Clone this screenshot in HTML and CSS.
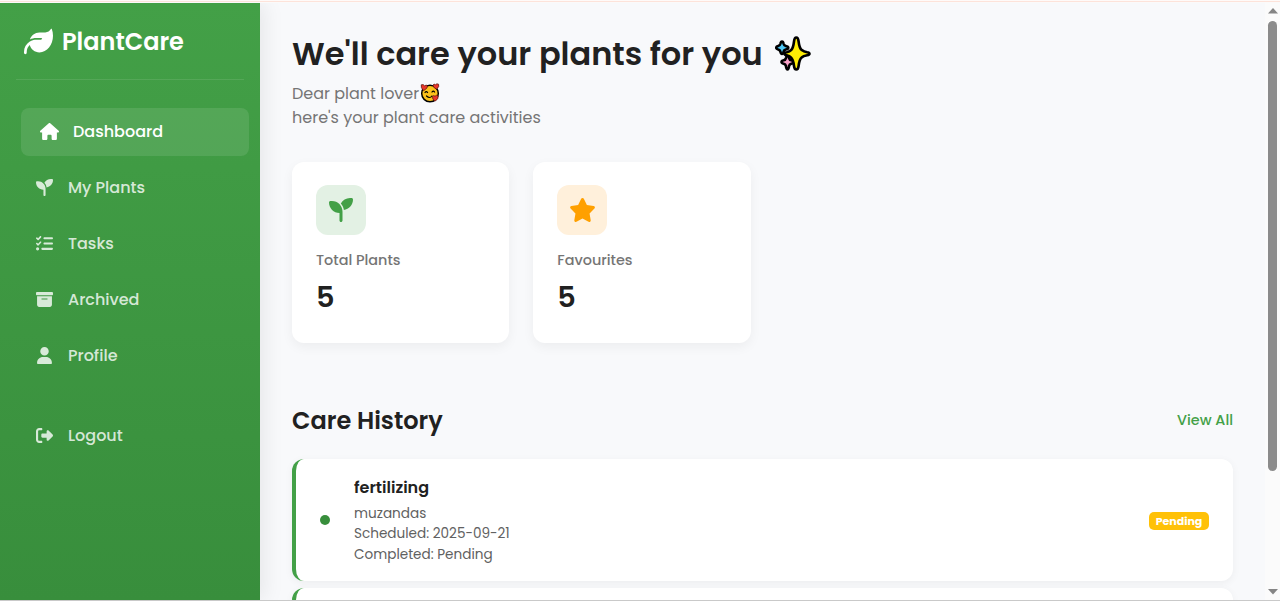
FILE: index.html
```html
<!DOCTYPE html>
<html lang="en">
<head>
<meta charset="utf-8">
<title>PlantCare</title>
<link rel="stylesheet" href="styles.css">
</head>
<body>
<div class="topline"></div>
<div class="app">
  <aside class="sidebar">
    <div class="brand">
      <svg class="brand-icon" viewBox="0 0 512 512"><path d="M272 96c-78.6 0-145.1 51.5-167.7 122.5c33.6-17 71.5-26.5 111.7-26.5h88c8.8 0 16 7.2 16 16s-7.2 16-16 16H288 216s0 0 0 0c-16.6 0-32.7 1.9-48.3 5.4c-25.9 5.9-49.9 16.4-71.4 30.7c0 0 0 0 0 0C38.3 298.8 0 364.9 0 440v16c0 13.3 10.7 24 24 24s24-10.7 24-24V440c0-48.7 20.7-92.5 53.8-123.2C121.6 392.3 190.3 448 272 448l1 0c132.1-.7 239-130.9 239-291.4c0-42.6-7.5-83.1-21.1-119.6c-2.6-6.9-12.7-6.6-16.2-.1C455.9 72.1 418.7 96 376 96L272 96z"/></svg>
      <span class="brand-name">PlantCare</span>
    </div>
    <nav class="menu">
      <a class="item active"><span class="ico"><svg class="wide" viewBox="0 0 576 512"><path d="M575.8 255.5c0 18-15 32.1-32 32.1h-32l.7 160.2c0 2.7-.2 5.4-.5 8.1V472c0 22.1-17.9 40-40 40H456c-1.1 0-2.2 0-3.3-.1c-1.4 .1-2.8 .1-4.2 .1H416 392c-22.1 0-40-17.9-40-40V448 384c0-17.7-14.3-32-32-32H256c-17.7 0-32 14.3-32 32v64 24c0 22.1-17.9 40-40 40H160 128.1c-1.5 0-3-.1-4.5-.2c-1.2 .1-2.4 .2-3.6 .2H104c-22.1 0-40-17.9-40-40V360c0-.9 0-1.9 .1-2.8V287.6H32c-18 0-32-14-32-32.1c0-9 3-17 10-24L266.4 8c7-7 15-8 22-8s15 2 21 7L564.8 231.5c8 7 12 15 11 24z"/></svg></span><span>Dashboard</span></a>
      <a class="item"><span class="ico"><svg viewBox="0 0 512 512"><path d="M512 32c0 113.6-84.6 207.5-194.2 222c-7.1-53.4-30.6-101.6-65.3-139.3C290.8 46.3 364 0 448 0h32c17.7 0 32 14.3 32 32zM0 96C0 78.3 14.3 64 32 64H64c123.7 0 224 100.3 224 224v32V480c0 17.7-14.3 32-32 32s-32-14.3-32-32V320C100.3 320 0 219.7 0 96z"/></svg></span><span>My Plants</span></a>
      <a class="item"><span class="ico"><svg viewBox="0 0 512 512"><path d="M152.1 38.2c9.9 8.9 10.7 24 1.8 33.9l-72 80c-4.4 4.9-10.6 7.8-17.2 7.9s-12.9-2.4-17.6-7L7 113C-2.3 103.6-2.3 88.4 7 79s24.6-9.4 33.9 0l22.1 22.1 55.1-61.2c8.9-9.9 24-10.7 33.9-1.8zm0 160c9.9 8.9 10.7 24 1.8 33.9l-72 80c-4.4 4.9-10.6 7.8-17.2 7.9s-12.9-2.4-17.6-7L7 273c-9.4-9.4-9.4-24.6 0-33.9s24.6-9.4 33.9 0l22.1 22.1 55.1-61.2c8.9-9.9 24-10.7 33.9-1.8zM224 96c0-17.7 14.3-32 32-32H480c17.7 0 32 14.3 32 32s-14.3 32-32 32H256c-17.7 0-32-14.3-32-32zm0 160c0-17.7 14.3-32 32-32H480c17.7 0 32 14.3 32 32s-14.3 32-32 32H256c-17.7 0-32-14.3-32-32zM160 416c0-17.7 14.3-32 32-32H480c17.7 0 32 14.3 32 32s-14.3 32-32 32H192c-17.7 0-32-14.3-32-32zM48 368a48 48 0 1 1 0 96 48 48 0 1 1 0-96z"/></svg></span><span>Tasks</span></a>
      <a class="item"><span class="ico"><svg viewBox="0 0 512 512"><path d="M32 32H480c17.7 0 32 14.3 32 32V96c0 17.7-14.3 32-32 32H32C14.3 128 0 113.7 0 96V64C0 46.3 14.3 32 32 32zm0 128H480V416c0 35.3-28.7 64-64 64H96c-35.3 0-64-28.7-64-64V160zm128 80c0 8.8 7.2 16 16 16H336c8.8 0 16-7.2 16-16s-7.2-16-16-16H176c-8.8 0-16 7.2-16 16z"/></svg></span><span>Archived</span></a>
      <a class="item"><span class="ico"><svg class="slim" viewBox="0 0 448 512"><path d="M224 256A128 128 0 1 0 224 0a128 128 0 1 0 0 256zm-45.7 48C79.8 304 0 383.8 0 482.3C0 498.7 13.3 512 29.7 512H418.3c16.4 0 29.7-13.3 29.7-29.7C448 383.8 368.2 304 269.7 304H178.3z"/></svg></span><span>Profile</span></a>
      <a class="item logout"><span class="ico"><svg viewBox="0 0 512 512"><path d="M377.9 105.9L500.7 228.7c7.2 7.2 11.3 17.1 11.3 27.3s-4.1 20.1-11.3 27.3L377.9 406.1c-6.4 6.4-15 9.9-24 9.9c-18.7 0-33.9-15.2-33.9-33.9l0-62.1-128 0c-17.7 0-32-14.3-32-32l0-64c0-17.7 14.3-32 32-32l128 0 0-62.1c0-18.7 15.2-33.9 33.9-33.9c9 0 17.6 3.6 24 9.9zM160 96L96 96c-17.7 0-32 14.3-32 32l0 256c0 17.7 14.3 32 32 32l64 0c17.7 0 32 14.3 32 32s-14.3 32-32 32l-64 0c-53 0-96-43-96-96L0 128C0 75 43 32 96 32l64 0c17.7 0 32 14.3 32 32s-14.3 32-32 32z"/></svg></span><span>Logout</span></a>
    </nav>
  </aside>

  <main class="main">
    <header class="greeting">
      <h1 class="title"><span>We'll care your plants for you</span>
        <svg class="sparkles" viewBox="0 0 36 36"><g stroke="#000" stroke-width="2.600" stroke-linejoin="round"><path fill="#50c8f5" d="M7 5.500q1.200 0 1.600 2.300q.4 1.800 2.200 2.200q2.500.5 2.500 1.700t-2.500 1.700q-1.800.4-2.200 2.200q-.4 2.400-1.600 2.400t-1.600-2.400q-.4-1.800-2.200-2.200q-2-.5-2-1.700t2-1.700q1.800-.4 2.200-2.200Q5.800 5.500 7 5.500z"/><path fill="#f9a1c8" d="M12.500 20q1.200 0 1.600 2.100q.4 1.800 2.200 2.200q2.300.5 2.300 1.700t-2.300 1.700q-1.800.4-2.200 2.200q-.4 3.600-1.600 3.600t-1.600-3.600q-.4-1.800-2.200-2.200q-2.200-.5-2.200-1.700t2.200-1.700q1.800-.4 2.200-2.200Q11.300 20 12.500 20z"/><path fill="#ffee05" d="M21.300 1.500q1.900 0 2.300 4q.8 7 3.300 8.600q1.800 1.500 5.300 2.200q2.300.3 2.300 1.500t-2.300 1.500q-4 .7-5.600 2.200q-2.200 1.800-3 8.500q-.4 3.500-2.300 3.500t-2.300-3.500q-.8-6.700-3-8.500q-1.300-1.500-4.300-2.200q-2.300-.3-2.300-1.500t2.300-1.500q3-.7 4.300-2.200q2.200-1.600 3-8.600q.4-4 2.300-4z"/></g></svg>
      </h1>
      <p class="sub">Dear plant lover<svg class="smile" viewBox="0 0 20 20"><circle cx="10" cy="10.500" r="8.300" fill="#fcc21b" stroke="#000" stroke-width="1.500"/><path fill="#e8372b" stroke="#3a0d08" stroke-width=".6" d="M1.200 1.800q2.300-1 3.300 1q2-1.600 3 .3q.5 2-3.800 4.600Q.4 5 1.200 1.800zM13 2q1-1.600 2.600-.3q1-1.700 3-.5q1.200 2.400-2 5Q12.700 4.600 13 2zM12.500 13.500q1-1.600 2.600-.3q1-1.700 3-.5q.8 3-3 5.600Q12 16.500 12.500 13.500z"/><path fill="none" stroke="#000" stroke-width="1.200" stroke-linecap="round" d="M5 9.500q1.300-1.700 2.600 0M12 9q1.300-1.700 2.600 0M6.500 13q3.300 3 5.500 0"/></svg><br>here's your plant care activities</p>
    </header>

    <section class="stats">
      <article class="stat">
        <div class="badge green"><svg viewBox="0 0 512 512"><path d="M512 32c0 113.6-84.6 207.5-194.2 222c-7.1-53.4-30.6-101.6-65.3-139.3C290.8 46.3 364 0 448 0h32c17.7 0 32 14.3 32 32zM0 96C0 78.3 14.3 64 32 64H64c123.7 0 224 100.3 224 224v32V480c0 17.7-14.3 32-32 32s-32-14.3-32-32V320C100.3 320 0 219.7 0 96z"/></svg></div>
        <div class="stat-label">Total Plants</div>
        <div class="stat-value">5</div>
      </article>
      <article class="stat">
        <div class="badge orange"><svg class="wide" viewBox="0 0 576 512"><path d="M316.900 18C311.600 7 300.400 0 288.100 0s-23.400 7-28.800 18L195 150.300 51.400 171.500c-12 1.800-22 10.200-25.700 21.700s-.7 24.200 7.900 32.700L137.800 329 113.200 474.700c-2 12 3 24.200 12.900 31.300s23 8 33.800 2.300l128.300-68.500 128.300 68.500c10.800 5.700 23.900 4.900 33.800-2.300s14.900-19.300 12.900-31.300L438.500 329 542.700 225.900c8.600-8.500 11.700-21.200 7.900-32.700s-13.700-19.900-25.700-21.700L381.200 150.300 316.900 18z"/></svg></div>
        <div class="stat-label">Favourites</div>
        <div class="stat-value">5</div>
      </article>
    </section>

    <section class="history">
      <div class="history-head">
        <h2 class="h2">Care History</h2>
        <a class="view-all">View All</a>
      </div>
      <article class="entry">
        <span class="dot"></span>
        <div class="entry-body">
          <h3 class="entry-title">fertilizing</h3>
          <p class="entry-line">muzandas</p>
          <p class="entry-line">Scheduled: 2025-09-21</p>
          <p class="entry-line">Completed: Pending</p>
        </div>
        <span class="pill">Pending</span>
      </article>
      <article class="entry next"></article>
    </section>
  </main>

  <div class="scroll">
    <svg class="arrow" viewBox="0 0 10 6"><path d="M5 0l5 5.500H0z"/></svg>
    <div class="thumb"></div>
    <svg class="arrow down" viewBox="0 0 10 6"><path d="M0 0h10L5 5.500z"/></svg>
  </div>
</div>
<div class="bottomline"></div>
</body>
</html>
```
FILE: styles.css
```css
* { box-sizing: border-box; margin: 0; padding: 0; }
body {
  height: 601px;
  overflow: hidden;
  display: flex;
  flex-direction: column;
  background: #f8f9fb;
  color: #212121;
  font-family: Poppins, Inter, "Open Sans", sans-serif;
}
svg { display: block; fill: currentColor; }
.topline { flex: none; height: 3px; border-top: 1px solid #fffaf8; border-bottom: 1px solid #fbfafa; background: #fde3da; }
.bottomline { flex: none; height: 1px; background: #c9c9c9; }
.app { flex: 1; min-height: 0; display: flex; }

.sidebar {
  position: relative;
  flex: none;
  width: 260px;
  padding: 0 16px;
  color: #fff;
  background: linear-gradient(#43a047, #388e3c);
  box-shadow: 4px 0 20px rgba(0, 0, 0, .08);
  clip-path: inset(0 -30px 0 0);
}
.brand { height: 77px; display: flex; align-items: center; gap: 9px; padding: 1px 0 0 8px; border-bottom: 1px solid rgba(255, 255, 255, .1); }
.brand-icon { width: 29px; height: 29px; }
.brand-name { font-size: 24px; font-weight: 600; line-height: 36px; }
.menu { display: flex; flex-direction: column; gap: 8px; margin-top: 28px; }
.item { height: 48px; display: flex; align-items: center; gap: 12px; padding: 0 16px 2px; border-radius: 8px; font-size: 16px; font-weight: 500; color: rgba(255, 255, 255, .8); white-space: nowrap; }
.item.active { background: rgba(255, 255, 255, .1); color: #fff; transform: translateX(5px); }
.item.logout { margin-top: 24px; }
.ico { width: 24px; display: flex; justify-content: center; }
.ico svg { width: 17px; height: 17px; }
.ico .wide { width: 19px; }
.ico .slim { width: 15px; }

.main { flex: 1; min-width: 0; padding: 27px 32px 0; overflow: hidden; }
.title { display: flex; align-items: center; gap: 12px; height: 48px; font-size: 32px; font-weight: 600; white-space: nowrap; }
.sparkles { width: 36px; height: 36px; }
.sub { margin-top: 4px; font-size: 16px; line-height: 24px; color: #757575; white-space: nowrap; }
.smile { display: inline-block; width: 20px; height: 20px; vertical-align: -4px; margin-left: 1px; }

.stats { display: flex; gap: 24px; margin-top: 31.600px; }
.stat { width: 217.300px; height: 181px; padding: 23.400px 24px; background: #fff; border-radius: 12px; box-shadow: 0 4px 12px rgba(0, 0, 0, .05); }
.badge { width: 50px; height: 50px; border-radius: 12px; display: flex; align-items: center; justify-content: center; }
.badge svg { width: 24px; height: 24px; }
.badge .wide { width: 27px; }
.green { background: #e3f1e4; color: #43a047; }
.orange { background: #fff0db; color: #ffa000; }
.stat-label { margin-top: 14px; font-size: 14.400px; line-height: 22px; font-weight: 500; color: #757575; }
.stat-value { margin-top: 5px; font-size: 28.800px; line-height: 43px; font-weight: 600; }

.history { margin-top: 60.200px; }
.history-head { display: flex; align-items: center; justify-content: space-between; height: 36px; }
.h2 { font-size: 24px; font-weight: 600; }
.view-all { font-size: 14.400px; font-weight: 500; color: #43a047; }
.entry { display: flex; align-items: center; height: 122px; margin-top: 19.800px; padding: 0 24px; background: #fff; border-left: 4px solid #43a047; border-radius: 12px; box-shadow: 0 2px 8px rgba(0, 0, 0, .05); }
.entry.next { margin-top: 7.600px; }
.dot { width: 10px; height: 10px; border-radius: 50%; background: #388e3c; }
.entry-body { flex: 1; margin-left: 24px; padding-top: 2px; }
.entry-title { font-size: 16px; font-weight: 600; line-height: 24px; margin-bottom: 4px; }
.entry-line { font-size: 13.600px; line-height: 20.400px; color: #616161; }
.pill { width: 60px; height: 18px; margin-top: 2px; border-radius: 5px; background: #ffc107; color: #fff; font-size: 11px; font-weight: 700; line-height: 18px; text-align: center; }

.scroll { flex: none; width: 15px; display: flex; flex-direction: column; align-items: center; padding: 5px 0 5px; background: #fbfbfb; }
.arrow { width: 10px; height: 6px; color: #858585; }
.thumb { width: 9px; height: 450px; margin-top: 7px; border-radius: 5px; background: #8b8b8b; }
.down { margin-top: auto; }
```
